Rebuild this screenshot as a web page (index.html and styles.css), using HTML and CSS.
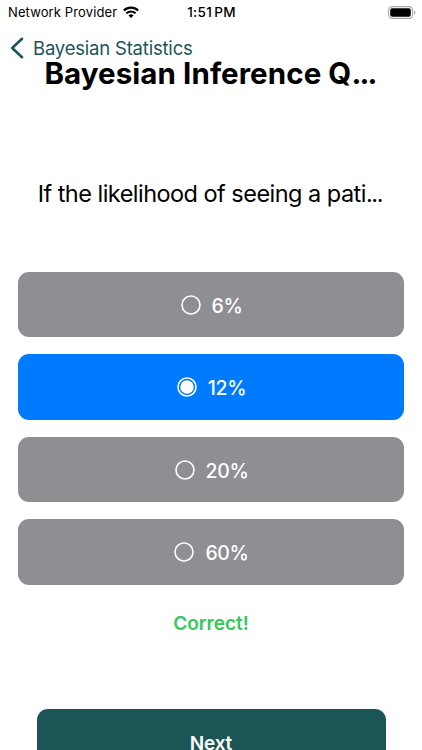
FILE: index.html
```html
<!DOCTYPE html>
<html lang="en">
<head>
    <meta charset="UTF-8">
    <meta name="viewport" content="width=device-width, initial-scale=1.0">
    <title>Bayesian Inference Quiz</title>
    <link rel="stylesheet" href="styles.css">
</head>
<body>
    <div class="status-bar">
        <div class="carrier">
            <span>Network Provider</span>
            <svg class="wifi" width="16" height="12" viewBox="0 0 16 12" fill="none" stroke="#000" stroke-width="2.1">
                <path d="M0.8 4.6a10.3 10.3 0 0 1 14.4 0"></path>
                <path d="M3.4 7.3a6.6 6.6 0 0 1 9.2 0"></path>
                <path d="M8 12L5.5 9.5a3.6 3.6 0 0 1 5 0z" fill="#000" stroke="none"></path>
            </svg>
        </div>
        <span class="time">1:51 PM</span>
        <svg class="battery" width="28" height="13" viewBox="0 0 28 13">
            <rect x="0.6" y="0.6" width="24" height="11.8" rx="3.6" fill="none" stroke="#a6a6a6" stroke-width="1.1"></rect>
            <rect x="2.2" y="2.2" width="20.6" height="8.6" rx="2" fill="#000"></rect>
            <path d="M26 4.5c1.9 0.6 1.9 3.4 0 4z" fill="#a6a6a6"></path>
        </svg>
    </div>
    <nav class="nav-bar">
        <svg class="chevron" width="14" height="22" viewBox="0 0 14 22" fill="none" stroke="currentColor" stroke-width="2.6" stroke-linecap="round" stroke-linejoin="round">
            <path d="M12 1.8L2.2 11L12 20.2"></path>
        </svg>
        <span class="back-label">Bayesian Statistics</span>
    </nav>
    <main>
        <h1>Bayesian Inference Q<span class="dots">...</span></h1>
        <p class="question">If the likelihood of seeing a pati<span class="dots">...</span></p>
        <div class="options">
            <button class="option">
                <svg class="radio" width="20" height="20" viewBox="0 0 20 20"><circle cx="10" cy="10" r="9"></circle></svg>
                <span>6%</span>
            </button>
            <button class="option selected">
                <svg class="radio" width="20" height="20" viewBox="0 0 20 20"><circle cx="10" cy="10" r="9"></circle><circle class="dot" cx="10" cy="10" r="6.7"></circle></svg>
                <span>12%</span>
            </button>
            <button class="option">
                <svg class="radio" width="20" height="20" viewBox="0 0 20 20"><circle cx="10" cy="10" r="9"></circle></svg>
                <span>20%</span>
            </button>
            <button class="option">
                <svg class="radio" width="20" height="20" viewBox="0 0 20 20"><circle cx="10" cy="10" r="9"></circle></svg>
                <span>60%</span>
            </button>
        </div>
        <p class="feedback">Correct!</p>
        <button class="next">Next</button>
    </main>
</body>
</html>
```
FILE: styles.css
```css
:root {
    --primary-color: #1c5555;
    --option-color: #8e8e93;
    --selected-color: #007aff;
    --correct-color: #34c759;
}

* {
    margin: 0;
    padding: 0;
    box-sizing: border-box;
    font-family: Inter, sans-serif;
}

body {
    height: 750px;
    background-color: #fff;
    color: #000;
    overflow: hidden;
}

.status-bar {
    display: grid;
    grid-template-columns: 1fr auto 1fr;
    align-items: center;
    height: 24px;
    padding: 0 6px 0 8px;
    font-size: 13px;
    line-height: 24px;
}

.carrier {
    display: flex;
    align-items: center;
    gap: 6px;
    letter-spacing: 0.12px;
    white-space: nowrap;
}

.time {
    padding-right: 1px;
    font-weight: 500;
    font-size: 13.5px;
    letter-spacing: 0.35px;
    word-spacing: -2px;
}

.battery {
    justify-self: end;
}

.nav-bar {
    display: flex;
    align-items: center;
    gap: 9px;
    height: 47px;
    padding-left: 10px;
    color: var(--primary-color);
}

.back-label {
    font-size: 18.5px;
    letter-spacing: -0.2px;
}

main {
    display: flex;
    flex-direction: column;
    align-items: center;
}

h1 {
    height: 36px;
    margin-top: -16px;
    padding-right: 2px;
    font-size: 29.5px;
    font-weight: 700;
    line-height: 36px;
    letter-spacing: 0.08px;
    white-space: nowrap;
}

.dots {
    letter-spacing: -1.8px;
}

.question {
    margin-top: 87px;
    height: 32px;
    padding-right: 2px;
    font-size: 23.5px;
    line-height: 32px;
    letter-spacing: -0.53px;
    white-space: nowrap;
}

.question .dots {
    letter-spacing: -1.3px;
}

.options {
    display: flex;
    flex-direction: column;
    gap: 17px;
    width: 385.4px;
    margin-top: 61.8px;
}

.option {
    display: flex;
    align-items: center;
    justify-content: center;
    gap: 11px;
    height: 65.5px;
    padding-left: 1px;
    border: none;
    border-radius: 11px;
    background-color: var(--option-color);
    color: #fff;
    font-size: 19.5px;
    font-weight: 500;
    letter-spacing: -0.4px;
}

.option span {
    padding-top: 2px;
}

.option.selected {
    background-color: var(--selected-color);
}

.radio {
    fill: none;
    stroke: #fff;
    stroke-width: 1.6;
}

.radio .dot {
    fill: #fff;
    stroke: none;
}

.feedback {
    margin-top: 26px;
    font-size: 19px;
    font-weight: 600;
    line-height: 26px;
    color: var(--correct-color);
}

.next {
    flex-shrink: 0;
    width: 349px;
    height: 68px;
    margin-top: 72.5px;
    border: none;
    border-radius: 11px;
    background-color: var(--primary-color);
    color: #fff;
    font-size: 19px;
    font-weight: 600;
    letter-spacing: -0.2px;
}
```
